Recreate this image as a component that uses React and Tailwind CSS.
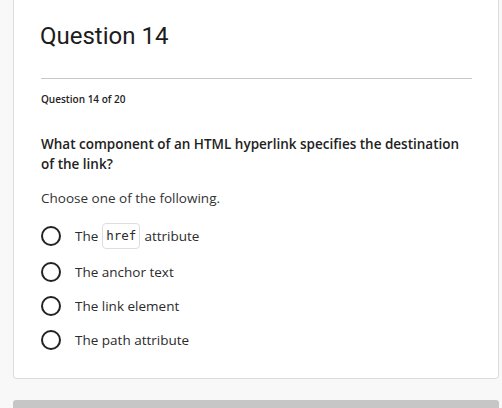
import React from "react";

const options = [
  { id: "a", label: "href" },
  { id: "b", text: "The anchor text" },
  { id: "c", text: "The link element" },
  { id: "d", text: "The path attribute" },
];

const Radio = () => (
  <span className="inline-block w-[20px] h-[20px] shrink-0 rounded-full border-2 border-[#222]" />
);

const App = () => {
  return (
    <main
      className="min-h-[408px] bg-[#f8f8f8] pl-[13px] pr-[3px] overflow-hidden"
      style={{ fontFamily: "'Open Sans', 'Noto Sans', sans-serif" }}
    >
      <section className="bg-white border border-t-0 border-[#dcdcdc] rounded-b-[4px] pl-[27px] pr-[26px] pt-[21px] pb-[26px]">
        <h1
          className="text-[24px] leading-[30px] text-[#1c1c1c] font-normal -ml-[1px]"
          style={{ fontFamily: "Roboto, 'Noto Sans', sans-serif" }}
        >
          Question 14
        </h1>
        <div className="mt-[27px] h-px bg-[#c8c8c8]" />
        <div className="mt-[13px] text-[10px] leading-[14px] font-semibold text-[#222]">
          Question 14 of 20
        </div>
        <p className="mt-[28px] text-[13.5px] leading-[20px] font-semibold text-[#222]">
          What component of an HTML hyperlink specifies the destination of the link?
        </p>
        <p className="mt-[14px] text-[13.5px] leading-[20px] text-[#333]">
          Choose one of the following.
        </p>
        <div className="mt-[15px] flex flex-col gap-[10px]">
          {options.map((opt) => (
            <label
              key={opt.id}
              className={`flex items-center gap-[14px] text-[13.5px] leading-[20px] text-[#2b2b2b] ${
                opt.label ? "h-[26px] mb-[1px]" : "h-[24px]"
              }`}
            >
              <Radio />
              {opt.label ? (
                <span className="flex items-center">
                  The
                  <code
                    className="mx-[4px] px-[3px] h-[26px] flex items-center border border-[#dedede] rounded-[4px] text-[12.5px] text-[#2b2b2b]"
                    style={{ fontFamily: "'DejaVu Sans Mono', 'Liberation Mono', monospace" }}
                  >
                    {opt.label}
                  </code>
                  attribute
                </span>
              ) : (
                <span>{opt.text}</span>
              )}
            </label>
          ))}
        </div>
      </section>
      <div className="mt-[21px] h-[20px] bg-[#c6c6c6] rounded-t-[3px]" />
    </main>
  );
};

export default App;
